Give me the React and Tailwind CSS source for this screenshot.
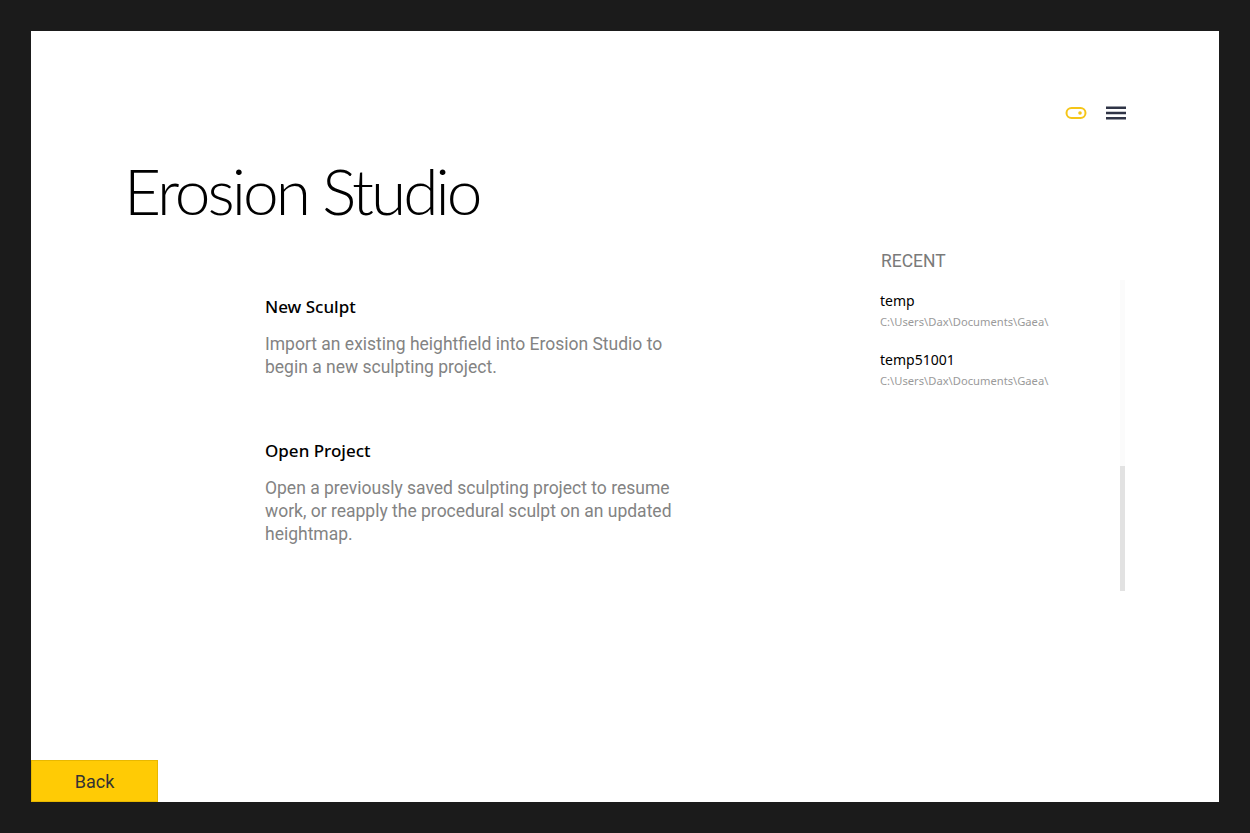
import React from "react";

// Erosion Studio start screen
const recent = [
  { name: "temp", path: "C:\\Users\\Dax\\Documents\\Gaea\\" },
  { name: "temp51001", path: "C:\\Users\\Dax\\Documents\\Gaea\\" },
];

const actions = [
  {
    title: "New Sculpt",
    text: "Import an existing heightfield into Erosion Studio to begin a new sculpting project.",
  },
  {
    title: "Open Project",
    text: "Open a previously saved sculpting project to resume work, or reapply the procedural sculpt on an updated heightmap.",
  },
];

const ToggleIcon = () => (
  <svg width="22" height="14" viewBox="0 0 22 14" fill="none">
    <rect x="1.5" y="2" width="19" height="10" rx="5" stroke="#f5c518" strokeWidth="2" />
    <circle cx="15" cy="7" r="1.8" fill="#f5c518" />
  </svg>
);

const MenuIcon = () => (
  <svg width="20" height="14" viewBox="0 0 20 14" fill="none">
    <rect x="0" y="0.5" width="20" height="2.5" fill="#2f3446" />
    <rect x="0" y="5.75" width="20" height="2.5" fill="#2f3446" />
    <rect x="0" y="11" width="20" height="2.5" fill="#2f3446" />
  </svg>
);

export default function App() {
  return (
    <div className="h-screen w-full bg-[#1b1b1b] px-[31px] pt-[31px] pb-[31px]">
      <div className="flex h-full flex-col bg-white">
        {/* top icons */}
        <div className="flex items-center justify-end gap-[19px] pr-[93px] pt-[75px]">
          <ToggleIcon />
          <MenuIcon />
        </div>

        <h1
          className="ml-[93px] mt-[39px] text-[64px] leading-none font-light tracking-[-3px] text-black"
          style={{ fontFamily: "Lato, sans-serif" }}
        >
          Erosion Studio
        </h1>

        <div className="mt-[25px] flex">
          {/* actions */}
          <div className="ml-[234px] flex w-[425px] flex-col gap-[60px] pt-[47px]">
            {actions.map((a) => (
              <div key={a.title}>
                <div
                  className="text-[17px] leading-[24px] font-medium text-black"
                  style={{ fontFamily: '"Noto Sans", sans-serif' }}
                >
                  {a.title}
                </div>
                <p
                  className="mt-[14px] text-[17.5px] leading-[23px] text-[#838383]"
                  style={{ fontFamily: "Roboto, sans-serif" }}
                >
                  {a.text}
                </p>
              </div>
            ))}
          </div>

          {/* recent */}
          <div className="ml-auto mr-[94px] flex w-[245px]">
            <div className="flex-1">
              <div
                className="pl-[1px] pt-[1px] text-[17.5px] leading-[24px] text-[#7a7a7a]"
                style={{ fontFamily: "Roboto, sans-serif" }}
              >
                RECENT
              </div>
              <div className="mt-[18px] flex flex-col gap-[19px]">
                {recent.map((r) => (
                  <div key={r.name} style={{ fontFamily: '"Noto Sans", sans-serif' }}>
                    <div className="text-[14px] leading-[20px] text-black">{r.name}</div>
                    <div className="mt-[2px] text-[11.2px] leading-[18px] text-[#9a9a9a]">{r.path}</div>
                  </div>
                ))}
              </div>
            </div>
            {/* scrollbar */}
            <div className="mt-[32px] flex h-[311px] w-[5px] flex-col bg-[#fbfbfb]">
              <div className="h-[186px]" />
              <div className="h-[125px] bg-[#e2e2e2]" />
            </div>
          </div>
        </div>

        <div className="mt-auto">
          <button
            className="h-[42px] w-[127px] border border-[#e8b800] bg-[#ffcb05] text-[18px] text-[#333]"
            style={{ fontFamily: "Roboto, sans-serif" }}
          >
            Back
          </button>
        </div>
      </div>
    </div>
  );
}
